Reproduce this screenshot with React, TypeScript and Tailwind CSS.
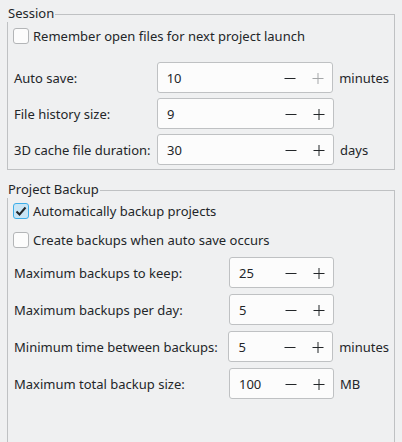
import type { ReactNode } from 'react';

const BORDER = 'border-[#bfc1c3]';

function GroupBox({ title, children, className = '' }: { title: string; children: ReactNode; className?: string }) {
  return (
    <div className="flex flex-col">
      <div className="flex h-[18px]">
        <span className="pl-px pr-px">{title}</span>
        <div className={`flex-1 mt-[10px] border-t border-r ${BORDER}`} />
      </div>
      <div className={`flex flex-col border-l border-r ${BORDER} px-[5px] ${className}`}>{children}</div>
    </div>
  );
}

function CheckBox({ label, checked = false, className = '' }: { label: string; checked?: boolean; className?: string }) {
  return (
    <div className={`flex items-center gap-[4px] h-[16px] ${className}`}>
      <div
        className={`w-[16px] h-[16px] rounded-[3px] border flex items-center justify-center ${
          checked ? 'bg-[#c9e5f5] border-[#3daee9]' : 'bg-[#fcfcfc] border-[#b3b5b7]'
        }`}
      >
        {checked && (
          <svg width="14" height="14" viewBox="0 0 14 14">
            <polyline points="2.5,7.5 5.5,10.5 11.5,3.5" fill="none" stroke="#232629" strokeWidth="2" />
          </svg>
        )}
      </div>
      <span>{label}</span>
    </div>
  );
}

function Minus() {
  return (
    <svg width="12" height="12" viewBox="0 0 12 12">
      <line x1="0.5" y1="6.5" x2="11.5" y2="6.5" stroke="#232629" strokeWidth="1" />
    </svg>
  );
}

function Plus({ disabled = false }: { disabled?: boolean }) {
  const c = disabled ? '#a5a7a9' : '#232629';
  return (
    <svg width="12" height="12" viewBox="0 0 12 12">
      <line x1="0.5" y1="6.5" x2="11.5" y2="6.5" stroke={c} strokeWidth="1" />
      <line x1="6" y1="1" x2="6" y2="12" stroke={c} strokeWidth="1" />
    </svg>
  );
}

function SpinRow({
  label,
  value,
  unit,
  labelWidth,
  boxWidth,
  plusDisabled = false,
}: {
  label: string;
  value: string;
  unit?: string;
  labelWidth: string;
  boxWidth: string;
  plusDisabled?: boolean;
}) {
  return (
    <div className="flex items-center h-[31px]">
      <span className={`${labelWidth} pl-px`}>{label}</span>
      <div className={`${boxWidth} h-[31px] flex items-center bg-[#fcfcfc] border ${BORDER} rounded-[3px]`}>
        <span className="flex-1 pl-[9px]">{value}</span>
        <div className="w-[28px] flex justify-center">
          <Minus />
        </div>
        <div className="w-[28px] flex justify-center">
          <Plus disabled={plusDisabled} />
        </div>
      </div>
      {unit && <span className="ml-[6px]">{unit}</span>}
    </div>
  );
}

export default function App() {
  return (
    <div className="w-[402px] h-[442px] overflow-hidden bg-[#eff0f1] text-[#232629] font-['Noto_Sans',sans-serif] text-[13px] leading-[18px] px-[7px] pt-[4px]">
      <GroupBox title="Session" className={`border-b pt-[6px] pb-[4px]`}>
        <CheckBox label="Remember open files for next project launch" />
        <div className="flex flex-col gap-[5px] mt-[18px]">
          <SpinRow label="Auto save:" value="10" unit="minutes" labelWidth="w-[144px]" boxWidth="w-[177px]" plusDisabled />
          <SpinRow label="File history size:" value="9" labelWidth="w-[144px]" boxWidth="w-[177px]" />
          <SpinRow label="3D cache file duration:" value="30" unit="days" labelWidth="w-[144px]" boxWidth="w-[177px]" />
        </div>
      </GroupBox>

      <div className="mt-[10px]">
        <GroupBox title="Project Backup" className="pt-[5px] h-[300px]">
          <CheckBox label="Automatically backup projects" checked />
          <CheckBox label="Create backups when auto save occurs" className="mt-[13px]" />
          <div className="flex flex-col gap-[6px] mt-[9px]">
            <SpinRow label="Maximum backups to keep:" value="25" labelWidth="w-[216px]" boxWidth="w-[105px]" />
            <SpinRow label="Maximum backups per day:" value="5" labelWidth="w-[216px]" boxWidth="w-[105px]" />
            <SpinRow label="Minimum time between backups:" value="5" unit="minutes" labelWidth="w-[216px]" boxWidth="w-[105px]" />
            <SpinRow label="Maximum total backup size:" value="100" unit="MB" labelWidth="w-[216px]" boxWidth="w-[105px]" />
          </div>
        </GroupBox>
      </div>
    </div>
  );
}
